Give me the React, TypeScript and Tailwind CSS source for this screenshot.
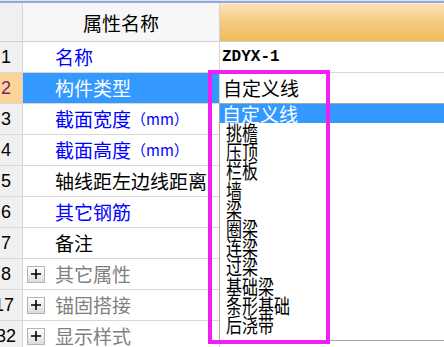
import React from 'react';

type Row = {
  n: string;
  name: string;
  tone: 'blue' | 'black' | 'grey' | 'selected';
  unit?: boolean;
  plus?: boolean;
  numShift?: string;
  value?: React.ReactNode;
};

const rows: Row[] = [
  { n: '1', name: '名称', tone: 'blue', value: <span className="font-['Liberation_Mono',monospace] text-[16px] font-bold pl-[2px]">ZDYX-1</span> },
  { n: '2', name: '构件类型', tone: 'selected', value: <span className="text-[19px] pl-[3px]">自定义线</span> },
  { n: '3', name: '截面宽度', tone: 'blue', unit: true },
  { n: '4', name: '截面高度', tone: 'blue', unit: true },
  { n: '5', name: '轴线距左边线距离', tone: 'black' },
  { n: '6', name: '其它钢筋', tone: 'blue' },
  { n: '7', name: '备注', tone: 'black' },
  { n: '8', name: '其它属性', tone: 'grey', plus: true },
  { n: '17', name: '锚固搭接', tone: 'grey', plus: true, numShift: 'ml-[-6px]' },
  { n: '32', name: '显示样式', tone: 'grey', plus: true, numShift: 'ml-[-4px]' },
];

const options = ['挑檐', '压顶', '栏板', '墙', '梁', '圈梁', '连梁', '过梁', '基础梁', '条形基础', '后浇带'];

const toneClass = {
  blue: 'text-[#0000ff]',
  black: 'text-black',
  grey: 'text-[#808080]',
  selected: 'text-white bg-[#3399ff]',
};

function PlusBox() {
  return (
    <div className="w-[18px] h-[17px] mr-[10px] border border-[#b4b4b4] bg-gradient-to-b from-white to-[#dcdcdc] flex items-center justify-center">
      <svg width="10" height="10" viewBox="0 0 10 10">
        <path d="M0 5h10M5 0v10" stroke="#000" strokeWidth="1.6" />
      </svg>
    </div>
  );
}

export default function App() {
  return (
    <div className="relative w-[444px] h-[347px] overflow-hidden bg-white font-['Noto_Sans_CJK_SC',sans-serif]">
      <div className="h-[3px] bg-[#8fa9dc] border-t border-[#dde5f2]" />
      {/* header */}
      <div className="flex h-[39px] border-b border-[#cfcfcf]">
        <div className="w-[23px] bg-[#f0f0f0] border-r border-[#d4d4d4]" />
        <div className="w-[197px] bg-[#f7f7f7] border-r border-[#d4d4d4] flex items-center justify-center text-[19px] leading-[39px] text-black">
          属性名称
        </div>
        <div className="flex-1 bg-gradient-to-b from-[#fbe3b6] via-[#f4ca7e] to-[#f0bb5b] border-t border-[#fdf0d8]" />
      </div>
      {rows.map((r) => (
        <div key={r.n} className="flex h-[31px] border-b border-[#d8d8d8]">
          <div
            className={`w-[23px] shrink-0 overflow-hidden border-r border-[#d4d4d4] flex items-center font-['Liberation_Sans',sans-serif] text-[18px] ${
              r.tone === 'selected' ? 'bg-[#fbd49a] text-[#7a1f6e]' : 'bg-[#f0f0f0] text-black'
            }`}
          >
            <span className={`whitespace-nowrap ${r.numShift ?? 'ml-[1px]'}`}>{r.n}</span>
          </div>
          <div
            className={`w-[197px] shrink-0 overflow-hidden border-r border-[#d4d4d4] flex items-center whitespace-nowrap text-[19px] leading-[30px] ${toneClass[r.tone]} ${
              r.plus ? 'pl-[4px]' : 'pl-[32px]'
            }`}
          >
            {r.plus && <PlusBox />}
            <span>{r.name}</span>
            {r.unit && <span className="text-[15px]">（mm）</span>}
          </div>
          <div className="flex-1 flex items-center text-black bg-white">{r.value}</div>
        </div>
      ))}

      {/* dropdown list */}
      <div className="absolute left-[219px] top-[103px] w-[240px] h-[238px] border border-[#a8a8a8] bg-white overflow-hidden">
        <div className="h-[19px] bg-[#3399ff] text-white text-[19px] leading-[19px] pl-[2px]">自定义线</div>
        {options.map((o) => (
          <div key={o} className="h-[19.2px] leading-[19.2px] pl-[6px] text-[16px] text-black whitespace-nowrap">
            <span className="inline-block scale-y-[1.3]">{o}</span>
          </div>
        ))}
      </div>

      {/* annotation frame */}
      <div className="absolute left-[208px] top-[70px] w-[122px] h-[274px] border-[4px] border-[#f020f0]" />
    </div>
  );
}
